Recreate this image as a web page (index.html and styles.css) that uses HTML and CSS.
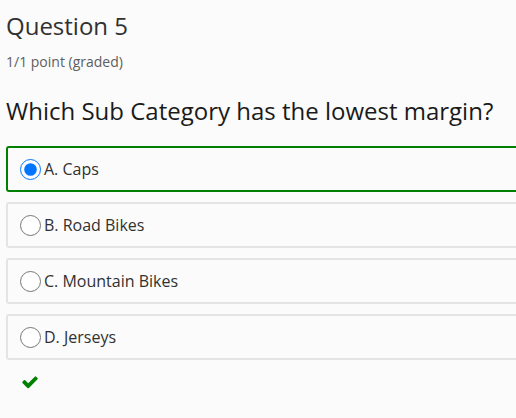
FILE: index.html
```html
<!DOCTYPE html>
<html>
<head>
<meta charset="utf-8">
<link rel="stylesheet" href="styles.css">
</head>
<body>
<div class="page">
  <h2 class="title">Question 5</h2>
  <div class="points">1/1 point (graded)</div>
  <p class="prompt">Which Sub Category has the lowest margin?</p>
  <div class="options">
    <label class="option selected"><input type="radio" name="q5" checked><span>A. Caps</span></label>
    <label class="option"><input type="radio" name="q5"><span>B. Road Bikes</span></label>
    <label class="option"><input type="radio" name="q5"><span>C. Mountain Bikes</span></label>
    <label class="option"><input type="radio" name="q5"><span>D. Jerseys</span></label>
  </div>
  <div class="status">
    <svg class="check" viewBox="0 0 1792 1792" width="18" height="18"><path fill="#008000" d="M1671 566q0 40-28 68l-724 724-136 136q-28 28-68 28t-68-28l-136-136-362-362q-28-28-28-68t28-68l136-136q28-28 68-28t68 28l294 295 656-657q28-28 68-28t68 28l136 136q28 28 28 68z"/></svg>
  </div>
</div>
</body>
</html>
```
FILE: styles.css
```css
html, body {
  margin: 0;
  padding: 0;
  background: #fbfbfb;
  overflow: hidden;
}
body {
  font-family: "Open Sans", "Noto Sans", sans-serif;
  color: #333;
}
.page {
  padding-left: 6px;
  width: 560px;
}
.title {
  margin: 10px 0 0;
  font-size: 24px;
  line-height: 32px;
  font-weight: 400;
  color: #313131;
}
.points {
  margin-top: 10px;
  font-size: 14px;
  line-height: 20px;
  color: #5e5e5e;
}
.prompt {
  margin: 23px 0 0;
  font-size: 24px;
  line-height: 32px;
  color: #1a1a1a;
}
.options {
  margin-top: 19px;
  display: flex;
  flex-direction: column;
  gap: 10px;
}
.option {
  display: flex;
  align-items: center;
  border: 2px solid #e4e4e4;
  border-radius: 3px;
  padding: 10px 0;
  font-size: 16px;
  line-height: 22px;
  color: #313131;
}
.option.selected {
  border-color: #008000;
}
.option input {
  width: 21px;
  height: 21px;
  margin: 0 3px 0 12px;
}
.status {
  margin-top: 13px;
  padding-left: 15px;
  height: 20px;
}
.check {
  display: block;
}
```
